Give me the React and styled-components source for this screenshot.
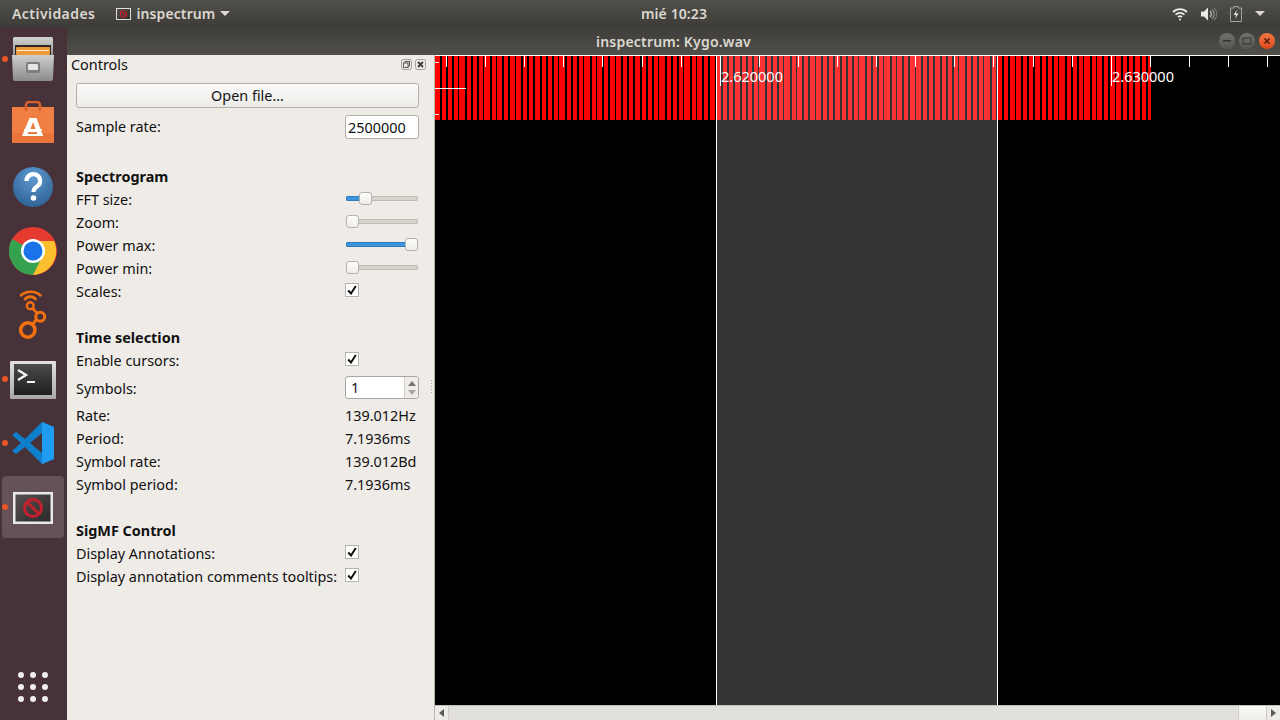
import React from 'react';
import styled, { createGlobalStyle } from 'styled-components';

const GlobalStyle = createGlobalStyle`
  html, body {
    margin: 0;
    padding: 0;
    width: 1280px;
    height: 720px;
    overflow: hidden;
    background: #000;
    font-family: 'Noto Sans', 'Open Sans', sans-serif;
  }
  * { box-sizing: border-box; }
`;

const Screen = styled.div`
  width: 1280px;
  height: 720px;
  display: flex;
  flex-direction: column;
`;

const TopBar = styled.div`
  height: 27px;
  flex: none;
  display: grid;
  grid-template-columns: 629px auto 1fr;
  align-items: center;
  padding: 0 15px 0 12px;
  background: linear-gradient(#504f4a, #3d3c38);
  color: #dcd8cf;
  font-size: 14px;
  font-weight: 600;
`;

const TopLeft = styled.div`
  display: flex;
  align-items: center;
`;

const Activities = styled.span`
  letter-spacing: 0.45px;
`;

const AppMenu = styled.div`
  display: flex;
  align-items: center;
  gap: 5px;
  margin-left: 21px;
  letter-spacing: 0.1px;
`;

const Clock = styled.div`
  letter-spacing: 0.1px;
`;

const TopRight = styled.div`
  display: flex;
  align-items: center;
  justify-content: flex-end;
  gap: 13px;
`;

const Caret = styled.span`
  width: 0;
  height: 0;
  border-left: 5px solid transparent;
  border-right: 5px solid transparent;
  border-top: 5px solid #dcd8cf;
  margin-left: ${p => p.$gap || 0}px;
`;

const Body = styled.div`
  flex: 1;
  display: flex;
  min-height: 0;
`;

const Dock = styled.nav`
  width: 67px;
  flex: none;
  display: flex;
  flex-direction: column;
  padding-right: 1px;
  background: #483239;
`;

const DockItem = styled.div`
  position: relative;
  height: 64px;
  flex: none;
  display: flex;
  align-items: center;
  justify-content: center;
  padding-top: ${p => p.$nudge || 0}px;
  margin-top: ${p => (p.$bottom ? 'auto' : '0')};
  margin-bottom: ${p => (p.$bottom ? '1px' : '0')};
  &::before {
    content: '';
    display: ${p => (p.$active ? 'block' : 'none')};
    position: absolute;
    left: 2px;
    top: 1px;
    width: 62px;
    height: 62px;
    border-radius: 4px;
    background: rgba(255, 255, 255, 0.16);
  }
  &::after {
    content: '';
    display: ${p => (p.$running ? 'block' : 'none')};
    position: absolute;
    left: 2px;
    top: 29px;
    width: 6px;
    height: 6px;
    border-radius: 50%;
    background: #e95420;
  }
  svg { position: relative; }
`;

const AppWindow = styled.div`
  flex: 1;
  min-width: 0;
  display: flex;
  flex-direction: column;
`;

const TitleBar = styled.div`
  height: 28px;
  flex: none;
  display: grid;
  grid-template-columns: 1fr auto 1fr;
  align-items: center;
  background: linear-gradient(#3e3d39, #504f4a);
  color: #dcd8cf;
  font-size: 14px;
  font-weight: 600;
`;

const WindowTitle = styled.div`
  grid-column: 2;
  letter-spacing: 0.2px;
`;

const WindowButtons = styled.div`
  grid-column: 3;
  justify-self: end;
  display: flex;
  gap: 4px;
  margin-right: 5px;
`;

const WindowButton = styled.div`
  width: 16px;
  height: 16px;
  border-radius: 50%;
  display: flex;
  align-items: center;
  justify-content: center;
  background: ${p => (p.$close
    ? 'linear-gradient(#f07746, #e0491c)'
    : 'linear-gradient(#72716c, #575651)')};
`;

const Content = styled.div`
  flex: 1;
  min-height: 0;
  display: flex;
`;

const Panel = styled.aside`
  position: relative;
  width: 368px;
  flex: none;
  background: #efebe7;
  border-right: 1px solid #b9b6b0;
  color: #111;
  font-size: 14.4px;
`;

const PanelHeader = styled.div`
  height: 28px;
  display: flex;
  align-items: center;
  padding: 0 8px 0 4px;
  gap: 3px;
`;

const PanelTitle = styled.div`
  flex: 1;
  margin-top: -10px;
`;

const DockButton = styled.svg`
  width: 11px;
  height: 11px;
  margin-top: -10px;
`;

const PanelBody = styled.div`
  padding: 0 15px 0 9px;
`;

const OpenButton = styled.div`
  height: 25px;
  display: flex;
  align-items: center;
  justify-content: center;
  border: 1px solid #b2afa8;
  border-radius: 3px;
  background: linear-gradient(#fcfbfa, #ecebe8);
  margin-bottom: 7px;
`;

const FormGrid = styled.div`
  display: grid;
  grid-template-columns: 269px 74px;
  row-gap: 6px;
  align-items: center;
`;

const Label = styled.div`
  grid-column: 1;
  height: 17px;
  line-height: 17px;
  white-space: nowrap;
  margin-top: ${p => (p.$lift ? '-2px' : '0')};
`;

const Heading = styled(Label)`
  grid-column: 1 / 3;
  font-weight: 700;
`;

const Spacer = styled.div`
  grid-column: 1 / 3;
  height: 17px;
`;

const Value = styled.div`
  grid-column: 2;
  height: 17px;
  line-height: 17px;
  white-space: nowrap;
`;

const NumberInput = styled.div`
  grid-column: 2;
  height: 24px;
  display: flex;
  align-items: center;
  padding-left: 2px;
  background: #fff;
  border: 1px solid #b2afa8;
  border-radius: 3px;
`;

const SpinBox = styled.div`
  grid-column: 2;
  height: 23px;
  display: flex;
  background: #fff;
  border: 1px solid #aaa7a0;
  border-radius: 3px;
  margin: 1px 0 2px;
`;

const SpinValue = styled.div`
  flex: 1;
  line-height: 21px;
  padding-left: 5px;
`;

const SpinArrows = styled.div`
  width: 14px;
  display: flex;
  flex-direction: column;
  align-items: center;
  justify-content: center;
  gap: 4px;
  background: #efecea;
  border-left: 1px solid #d2cfc9;
  border-radius: 0 2px 2px 0;
`;

const SpinArrow = styled.span`
  width: 0;
  height: 0;
  border-left: 4px solid transparent;
  border-right: 4px solid transparent;
  border-bottom: ${p => (p.$down ? '0' : '5px solid #77756f')};
  border-top: ${p => (p.$down ? '5px solid #a9a7a1' : '0')};
`;

const SliderTrack = styled.div`
  grid-column: 2;
  position: relative;
  height: 17px;
  margin-top: -1px;
  margin-bottom: 1px;
  display: flex;
  align-items: center;
`;

const Groove = styled.div`
  width: 72px;
  height: 5px;
  margin-left: 1px;
  border-radius: 2px;
  background: #d6d3cd;
  box-shadow: inset 0 0 0 1px #bfbcb5;
  overflow: hidden;
`;

const GrooveFill = styled.div`
  height: 100%;
  background: #3d95dd;
  box-shadow: inset 0 0 0 1px #2f7dbd;
`;

const SliderHandle = styled.div`
  position: absolute;
  top: 2px;
  width: 13px;
  height: 13px;
  border-radius: 3px;
  border: 1px solid #b5b2ab;
  background: linear-gradient(#fdfdfc, #efedea);
`;

const CheckBox = styled.div`
  grid-column: 2;
  width: 14px;
  height: 14px;
  display: flex;
  align-items: center;
  justify-content: center;
  background: #fff;
  border: 1px solid #b5b2ab;
  margin-top: -4px;
`;

const SplitterDots = styled.div`
  position: absolute;
  right: 2px;
  top: 325px;
  width: 1px;
  height: 15px;
  background: repeating-linear-gradient(#a8a59f 0 1px, transparent 1px 3px);
`;

const Plot = styled.main`
  flex: 1;
  min-width: 0;
  display: flex;
  flex-direction: column;
`;

const Canvas = styled.div`
  position: relative;
  flex: 1;
  min-height: 0;
  background: #000;
  border-top: 1px solid #fff;
  svg { display: block; }
`;

const Selection = styled.div`
  position: absolute;
  left: 281px;
  top: 0;
  bottom: 0;
  width: 282px;
  border-left: 1px solid #fff;
  border-right: 1px solid #fff;
  background: rgba(255, 255, 255, 0.2);
`;

const AxisLabel = styled.div`
  position: absolute;
  top: 10px;
  color: #fff;
  font-size: 14.5px;
  line-height: 20px;
`;

const ScrollBar = styled.div`
  height: 15px;
  flex: none;
  display: flex;
  border-top: 1px solid #c4c1ba;
  background: #e2e0da;
`;

const ScrollArrow = styled.div`
  width: 14px;
  flex: none;
  display: flex;
  align-items: center;
  justify-content: center;
  border-${p => (p.$right ? 'left' : 'right')}: 1px solid #cfccc6;
  background: #ecebe6;
`;

const ScrollTriangle = styled.span`
  width: 0;
  height: 0;
  border-top: 4px solid transparent;
  border-bottom: 4px solid transparent;
  border-${p => (p.$right ? 'left' : 'right')}: 5px solid #5c5b57;
`;

const ScrollGroove = styled.div`
  flex: 1;
`;

const ScrollThumb = styled.div`
  width: 28px;
  flex: none;
  background: linear-gradient(#fbfaf8, #eeece8);
  border-left: 1px solid #cfccc6;
`;

const FilesIcon = () => (
  <svg width="42" height="44" viewBox="0 0 42 44">
    <defs>
      <linearGradient id="cabTop" x1="0" y1="0" x2="0" y2="1">
        <stop offset="0" stopColor="#d4d4d2" />
        <stop offset="1" stopColor="#8f8f8d" />
      </linearGradient>
      <linearGradient id="cab" x1="0" y1="0" x2="0" y2="1">
        <stop offset="0" stopColor="#cfcfcd" />
        <stop offset="1" stopColor="#8b8b89" />
      </linearGradient>
    </defs>
    <path d="M1 1.5 a1.5 1.5 0 0 1 1.5 -1.5 h37 a1.5 1.5 0 0 1 1.5 1.5 V20 H1z" fill="url(#cabTop)" />
    <rect x="3" y="8" width="36" height="11" fill="#2b2927" />
    <rect x="4" y="10" width="34" height="8" rx="1" fill="#ec9a3a" />
    <rect x="5" y="13" width="32" height="1" fill="#ffeccb" />
    <path d="M0 18 h42 l-1 24 a2 2 0 0 1 -2 2 h-36 a2 2 0 0 1 -2 -2z" fill="url(#cab)" />
    <rect x="14" y="25" width="14" height="11" rx="2" fill="#7f7f7d" />
    <rect x="16" y="27" width="10" height="6" rx="1" fill="#e6e6e4" />
  </svg>
);

const SoftwareIcon = () => (
  <svg width="42" height="44" viewBox="0 0 42 44">
    <path d="M14 10 V4 a3 3 0 0 1 3 -3 h8 a3 3 0 0 1 3 3 v6" fill="none" stroke="#d9602c" strokeWidth="2.6" />
    <rect x="0" y="6" width="42" height="36" fill="#ef7f42" />
    <rect x="0" y="32" width="42" height="10" fill="#ea7439" />
    <path d="M14 10 V6 M28 10 V6" stroke="#d9602c" strokeWidth="2.6" />
    <path d="M17.5 17 h7 l6.5 18 h-5 l-1.2 -4 h-8.6 l-1.2 4 h-5z M21 21 l-2.6 7 h5.2z" fill="#fff" fillRule="evenodd" />
    <rect x="12" y="28" width="18" height="1.6" fill="#fff" />
    <rect x="11" y="33" width="20" height="2" fill="#fff" />
  </svg>
);

const HelpIcon = () => (
  <svg width="42" height="42" viewBox="0 0 42 42">
    <defs>
      <radialGradient id="help" cx="0.5" cy="0.25" r="0.8">
        <stop offset="0" stopColor="#5f9ad0" />
        <stop offset="1" stopColor="#2c5f92" />
      </radialGradient>
    </defs>
    <circle cx="21" cy="21" r="20" fill="url(#help)" />
    <path d="M14.5 15 a6.8 6.8 0 1 1 10.5 5.6 c-2.4 1.6 -3.5 2.6 -3.5 5.4" fill="none" stroke="#fff" strokeWidth="4.2" />
    <circle cx="21.5" cy="32" r="2.8" fill="#fff" />
  </svg>
);

const ChromeIcon = () => (
  <svg width="48" height="48" viewBox="0 0 48 48">
    <circle cx="24" cy="24" r="24" fill="#e53a30" />
    <path d="M24 24 L3.2 12 A24 24 0 0 0 24 48 L36 27z" fill="#34a24f" />
    <path d="M24 14 H45 A24 24 0 0 1 24 48 L35 26z" fill="#fcc02e" />
    <circle cx="24" cy="24" r="12" fill="#fff" />
    <circle cx="24" cy="24" r="9.5" fill="#1a73e8" />
  </svg>
);

const RadioIcon = () => (
  <svg width="32" height="50" viewBox="0 0 32 50" fill="none" stroke="#f2700f">
    <path d="M3.2 6 A15 15 0 0 1 24.2 6" strokeWidth="2.6" />
    <path d="M7.5 10 A6.8 6.8 0 0 1 19.2 10" strokeWidth="2.6" />
    <circle cx="13.2" cy="15.7" r="3.4" strokeWidth="2.4" />
    <path d="M15.7 18.5 L20 23" strokeWidth="2.6" />
    <circle cx="23.2" cy="26.7" r="4.5" strokeWidth="3" />
    <path d="M19 30 L16 34" strokeWidth="3" />
    <circle cx="10.8" cy="40" r="7.2" strokeWidth="3.6" />
  </svg>
);

const TerminalIcon = () => (
  <svg width="46" height="38" viewBox="0 0 46 38">
    <defs>
      <linearGradient id="term" x1="0" y1="0" x2="0" y2="1">
        <stop offset="0" stopColor="#4c4c4a" />
        <stop offset="1" stopColor="#1e1e1d" />
      </linearGradient>
      <linearGradient id="termFrame" x1="0" y1="0" x2="0" y2="1">
        <stop offset="0" stopColor="#e2e2e0" />
        <stop offset="1" stopColor="#a8a8a6" />
      </linearGradient>
    </defs>
    <rect width="46" height="38" rx="1" fill="url(#termFrame)" />
    <rect x="4" y="3" width="38" height="31" fill="url(#term)" />
    <path d="M8 9 l8 5 l-8 5" fill="none" stroke="#f4f4f2" strokeWidth="2.4" />
    <rect x="17" y="20" width="8" height="2" fill="#f4f4f2" />
  </svg>
);

const VsCodeIcon = () => (
  <svg width="44" height="44" viewBox="0 0 44 44">
    <path d="M31 1 L43 6 V38 L31 43 L14 26 L5 33 L1 30 L10 22 L1 14 L5 11 L14 18z M31 12 L19 22 L31 32z" fill="#0d7fcb" fillRule="evenodd" />
    <path d="M31 1 L43 6 V38 L31 43z" fill="#1f9cf0" />
  </svg>
);

const InspectrumIcon = ({ size = 40 }) => (
  <svg width={size} height={size * 0.8} viewBox="0 0 40 32">
    <defs>
      <linearGradient id="insp" x1="0" y1="0" x2="1" y2="1">
        <stop offset="0" stopColor="#55504f" />
        <stop offset="1" stopColor="#2b2a29" />
      </linearGradient>
    </defs>
    <rect width="40" height="32" fill="#e9e9e7" />
    <rect x="2.5" y="2.5" width="35" height="27" fill="url(#insp)" />
    <circle cx="20" cy="16" r="8.5" fill="none" stroke="#c4202f" strokeWidth="3" />
    <path d="M14 10 L26 22" stroke="#c4202f" strokeWidth="3" />
  </svg>
);

const AppGridIcon = () => (
  <svg width="30" height="30" viewBox="0 0 30 30" fill="#f0eeec">
    {[3, 15, 27].map(y => [3, 15, 27].map(x => <circle key={`${x}-${y}`} cx={x} cy={y} r="3" />))}
  </svg>
);

const WifiIcon = () => (
  <svg width="16" height="14" viewBox="0 0 16 14" fill="none" stroke="#eceae5" strokeWidth="1.8">
    <path d="M1 5 a10 10 0 0 1 14 0" />
    <path d="M3.5 7.6 a6.5 6.5 0 0 1 9 0" />
    <path d="M6 10 a3 3 0 0 1 4 0" />
    <circle cx="8" cy="12.5" r="1" fill="#eceae5" stroke="none" />
  </svg>
);

const VolumeIcon = () => (
  <svg width="16" height="14" viewBox="0 0 16 14" fill="none">
    <path d="M0 4.5 h3 l4 -4 v13 l-4 -4 h-3z" fill="#eceae5" />
    <path d="M9 4 a4 4 0 0 1 0 6" stroke="#b5b3ae" strokeWidth="1.4" />
    <path d="M11 2.2 a6.5 6.5 0 0 1 0 9.6" stroke="#8b8985" strokeWidth="1.4" />
    <path d="M13 .6 a9 9 0 0 1 0 12.8" stroke="#77756f" strokeWidth="1.2" />
  </svg>
);

const BatteryIcon = () => (
  <svg width="12" height="16" viewBox="0 0 12 16" fill="none">
    <path d="M4 .5 h4 v1.5 h3.5 v13.5 h-11 v-13.5 h3.5z" stroke="#a5a39e" />
    <path d="M7 4 L3.5 9 h2.5 L5 13 L8.5 7.5 h-2.5z" fill="#e6e4df" />
  </svg>
);

const CheckMark = () => (
  <svg width="10" height="10" viewBox="0 0 10 10" fill="none" stroke="#111" strokeWidth="2">
    <path d="M1.2 5.5 L4 8.5 L8.8 1" />
  </svg>
);

const Checked = () => (
  <CheckBox>
    <CheckMark />
  </CheckBox>
);

const Slider = ({ value }) => (
  <SliderTrack>
    <Groove>
      <GrooveFill style={{ width: `${value + 5}px` }} />
    </Groove>
    <SliderHandle style={{ left: `${value}px` }} />
  </SliderTrack>
);

// stripes of the waterfall, a bit uneven like the real render
const STRIPE_WIDTHS = [2, 2, 2, 1, 2, 2, 2, 1, 2, 1, 2, 2, 1, 2, 2, 2];
const stripes = Array.from({ length: 114 }, (_, i) => ({
  x: Math.round(4.5 + 6.25 * i),
  w: STRIPE_WIDTHS[i % STRIPE_WIDTHS.length],
}));
const ticks = Array.from({ length: 22 }, (_, i) => 11 + 39.1 * i);

const Spectrogram = () => (
  <svg width="845" height="649" viewBox="0 0 845 649" shapeRendering="crispEdges">
    <rect x="0" y="0" width="716" height="64" fill="#ff0000" />
    {stripes.map(s => <rect key={s.x} x={s.x} y="0" width={s.w} height="64" fill="#000" />)}
    {ticks.map((x, i) => (
      <rect key={x} x={Math.round(x)} y="0" width="1" height={i === 7 || i === 17 ? 30 : 11} fill="#fff" />
    ))}
    <rect x="0" y="6" width="4" height="1" fill="#fff" />
    <rect x="0" y="32" width="31" height="1" fill="#fff" />
    <rect x="0" y="58" width="4" height="1" fill="#fff" />
  </svg>
);

const App = () => (
  <Screen>
    <GlobalStyle />
    <TopBar>
      <TopLeft>
        <Activities>Actividades</Activities>
        <AppMenu>
          <InspectrumIcon size={15} />
          inspectrum
          <Caret />
        </AppMenu>
      </TopLeft>
      <Clock>mié 10:23</Clock>
      <TopRight>
        <WifiIcon />
        <VolumeIcon />
        <BatteryIcon />
        <Caret />
      </TopRight>
    </TopBar>
    <Body>
      <Dock>
        <DockItem $running><FilesIcon /></DockItem>
        <DockItem><SoftwareIcon /></DockItem>
        <DockItem><HelpIcon /></DockItem>
        <DockItem><ChromeIcon /></DockItem>
        <DockItem><RadioIcon /></DockItem>
        <DockItem $running $nudge={2}><TerminalIcon /></DockItem>
        <DockItem $running><VsCodeIcon /></DockItem>
        <DockItem $running $active $nudge={2}><InspectrumIcon /></DockItem>
        <DockItem $bottom><AppGridIcon /></DockItem>
      </Dock>
      <AppWindow>
        <TitleBar>
          <WindowTitle>inspectrum: Kygo.wav</WindowTitle>
          <WindowButtons>
            <WindowButton>
              <svg width="10" height="10" viewBox="0 0 10 10"><rect x="1" y="4" width="8" height="1.6" fill="#35342f" /></svg>
            </WindowButton>
            <WindowButton>
              <svg width="10" height="10" viewBox="0 0 10 10"><rect x="1" y="2" width="8" height="6" fill="none" stroke="#35342f" /></svg>
            </WindowButton>
            <WindowButton $close>
              <svg width="10" height="10" viewBox="0 0 10 10"><path d="M2.5 2.5 L7.5 7.5 M7.5 2.5 L2.5 7.5" stroke="#4a1808" strokeWidth="1.4" /></svg>
            </WindowButton>
          </WindowButtons>
        </TitleBar>
        <Content>
          <Panel>
            <PanelHeader>
              <PanelTitle>Controls</PanelTitle>
              <DockButton viewBox="0 0 11 11" fill="none" stroke="#5b5a56">
                <rect x=".5" y=".5" width="10" height="10" rx="2" stroke="#a5a29c" />
                <rect x="4" y="2.5" width="4.5" height="4.5" />
                <rect x="2.5" y="4" width="4.5" height="4.5" fill="#efebe7" />
              </DockButton>
              <DockButton viewBox="0 0 11 11" fill="none">
                <rect x=".5" y=".5" width="10" height="10" rx="2" stroke="#a5a29c" />
                <path d="M3 3 L8 8 M8 3 L3 8" stroke="#3d3c39" strokeWidth="1.8" />
              </DockButton>
            </PanelHeader>
            <PanelBody>
              <OpenButton>Open file...</OpenButton>
              <FormGrid>
                <Label $lift>Sample rate:</Label>
                <NumberInput>2500000</NumberInput>
                <Spacer />
                <Heading>Spectrogram</Heading>
                <Label>FFT size:</Label>
                <Slider value={14} />
                <Label>Zoom:</Label>
                <Slider value={1} />
                <Label>Power max:</Label>
                <Slider value={60} />
                <Label>Power min:</Label>
                <Slider value={1} />
                <Label>Scales:</Label>
                <Checked />
                <Spacer />
                <Heading>Time selection</Heading>
                <Label>Enable cursors:</Label>
                <Checked />
                <Label>Symbols:</Label>
                <SpinBox>
                  <SpinValue>1</SpinValue>
                  <SpinArrows>
                    <SpinArrow />
                    <SpinArrow $down />
                  </SpinArrows>
                </SpinBox>
                <Label>Rate:</Label>
                <Value>139.012Hz</Value>
                <Label>Period:</Label>
                <Value>7.1936ms</Value>
                <Label>Symbol rate:</Label>
                <Value>139.012Bd</Value>
                <Label>Symbol period:</Label>
                <Value>7.1936ms</Value>
                <Spacer />
                <Heading>SigMF Control</Heading>
                <Label>Display Annotations:</Label>
                <Checked />
                <Label>Display annotation comments tooltips:</Label>
                <Checked />
              </FormGrid>
            </PanelBody>
            <SplitterDots />
          </Panel>
          <Plot>
            <Canvas>
              <Spectrogram />
              <Selection />
              <AxisLabel style={{ left: '286px' }}>2.620000</AxisLabel>
              <AxisLabel style={{ left: '677px' }}>2.630000</AxisLabel>
            </Canvas>
            <ScrollBar>
              <ScrollArrow><ScrollTriangle /></ScrollArrow>
              <ScrollGroove />
              <ScrollThumb />
              <ScrollArrow $right><ScrollTriangle $right /></ScrollArrow>
            </ScrollBar>
          </Plot>
        </Content>
      </AppWindow>
    </Body>
  </Screen>
);

export default App;
